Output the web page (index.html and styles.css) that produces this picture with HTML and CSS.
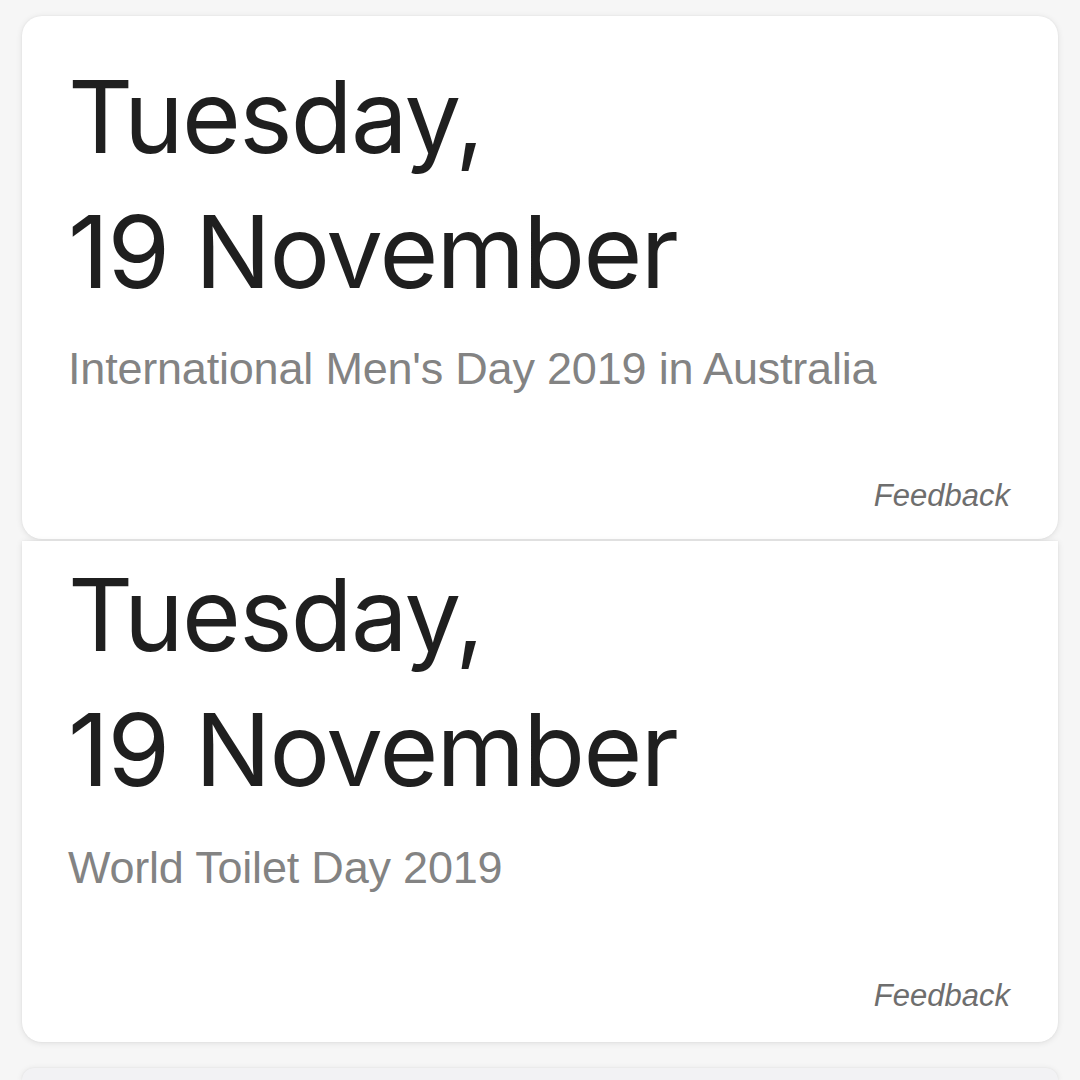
FILE: index.html
```html
<!DOCTYPE html>
<html lang="en">
<head>
<meta charset="utf-8">
<title>Tuesday, 19 November</title>
<link rel="stylesheet" href="styles.css">
</head>
<body>
<main class="feed">
  <section class="card card--first">
    <h1 class="date">Tuesday,<br>19 November</h1>
    <p class="event">International Men's Day 2019 in Australia</p>
    <div class="feedback">Feedback</div>
  </section>
  <section class="card card--joined">
    <h1 class="date">Tuesday,<br>19 November</h1>
    <p class="event">World Toilet Day 2019</p>
    <div class="feedback">Feedback</div>
  </section>
  <section class="card card--next"></section>
</main>
</body>
</html>
```
FILE: styles.css
```css
* { box-sizing: border-box; }
html, body { margin: 0; padding: 0; }
body {
  background: #f6f6f6;
  width: 1080px;
  height: 1080px;
  overflow: hidden;
}
.feed {
  display: flex;
  flex-direction: column;
  height: 1080px;
  padding: 16px 22px 0 22px;
}
.card {
  flex: none;
  background: #ffffff;
  border-radius: 20px;
  box-shadow: 0 1px 6px rgba(0, 0, 0, 0.10), 0 0 2px rgba(0, 0, 0, 0.05);
  padding: 33px 48px 23px 46px;
  display: flex;
  flex-direction: column;
}
.card--joined {
  margin-top: 2px;
  border-top-left-radius: 0;
  border-top-right-radius: 0;
  padding: 6px 48px 26px 46px;
}
.card--next {
  flex: 1 1 auto;
  margin-top: 26px;
  padding: 0;
  border-bottom-left-radius: 0;
  border-bottom-right-radius: 0;
  background: #f2f2f4;
}
.date {
  margin: 0;
  font-family: "Inter", "Roboto", sans-serif;
  font-weight: 400;
  font-size: 101px;
  line-height: 135px;
  color: #1f1f1f;
  letter-spacing: -1.7px;
}
.event {
  margin: 22px 0 0 0;
  font-family: "Liberation Sans", Arial, sans-serif;
  font-size: 45px;
  line-height: 56px;
  color: #838383;
  letter-spacing: -0.2px;
}
.card--joined .event { margin-top: 23px; }
.feedback {
  margin-top: 79px;
  text-align: right;
  font-family: "Liberation Sans", Arial, sans-serif;
  font-style: italic;
  font-size: 31px;
  line-height: 40px;
  color: #6e6e6e;
}
.card--joined .feedback { margin-top: 80px; }
```
